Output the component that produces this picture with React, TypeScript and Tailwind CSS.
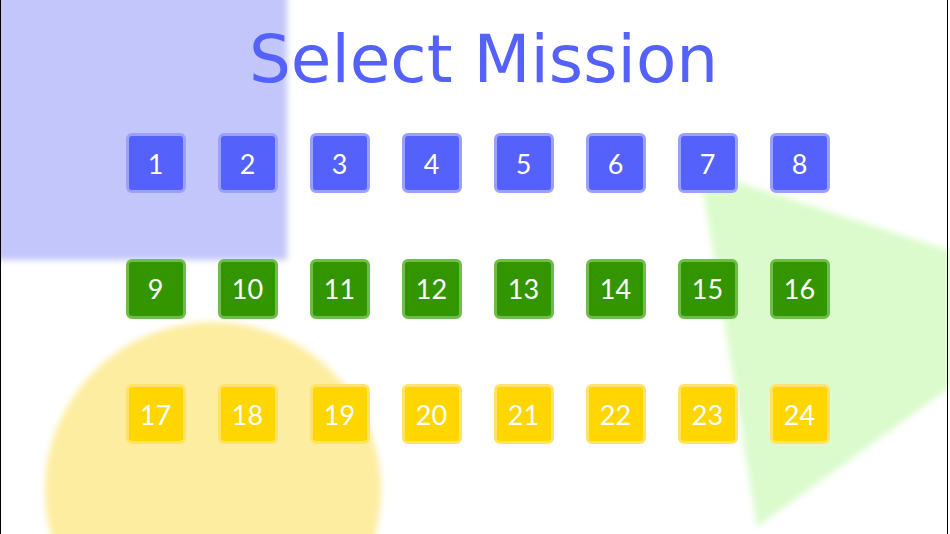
import React from "react"

const rows = [
    { start: 1, tile: "bg-[#5561fb] border-[#9ba1fb]" },
    { start: 9, tile: "bg-[#339600] border-[#6cbd4a]" },
    { start: 17, tile: "bg-[#ffd600] border-[#ffe267]" },
]

function MissionTile({ n, tile }: { n: number; tile: string }) {
    return (
        <button
            className={`w-[60px] h-[60px] rounded-[6px] border-[3px] flex items-center justify-center text-white text-[27px] leading-none ${tile}`}
            style={{ fontFamily: "Lato, 'Noto Sans', sans-serif" }}
        >
            {n}
        </button>
    )
}

export default function App() {
    return (
        <div className="relative w-[950px] h-[534px] overflow-hidden bg-white">
            {/* background shapes */}
            <div className="absolute left-[-20px] top-[-20px] w-[307px] h-[280px] bg-[#c3c6fb] blur-[3px]" />
            <div className="absolute left-[45px] top-[322px] w-[336px] h-[336px] rounded-full bg-[#fdeda0] blur-[3px]" />
            <svg className="absolute left-0 top-0 blur-[3px]" width="950" height="534" viewBox="0 0 950 534">
                <polygon points="700,170 1081,293 757,527" fill="#dbfbcc" />
            </svg>
            <div className="absolute left-0 top-0 h-full w-px bg-black" />
            <div className="absolute left-[947px] top-0 h-full w-px bg-black" />

            {/* content */}
            <div className="relative flex flex-col items-center">
                <h1
                    className="mt-[22px] ml-[17px] h-[76px] text-[66px] leading-[76px] text-[#5561fb]"
                    style={{ fontFamily: "'DejaVu Sans', Verdana, sans-serif" }}
                >
                    Select Mission
                </h1>
                <div className="mt-[35px] ml-[5px] flex flex-col gap-[65.5px]">
                    {rows.map((row) => (
                        <div key={row.start} className="flex gap-[32px]">
                            {Array.from({ length: 8 }, (_, i) => (
                                <MissionTile key={i} n={row.start + i} tile={row.tile} />
                            ))}
                        </div>
                    ))}
                </div>
            </div>
        </div>
    )
}
